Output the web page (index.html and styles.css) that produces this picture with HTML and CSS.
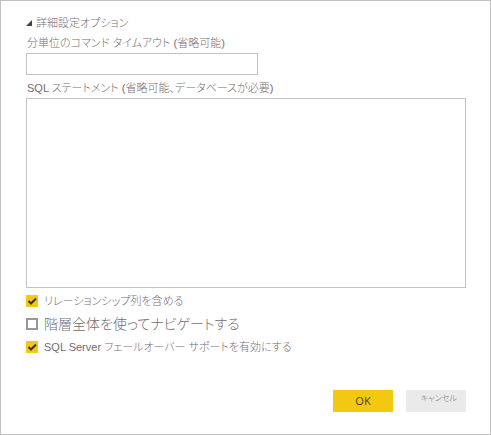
FILE: index.html
```
<!DOCTYPE html>
<html lang="ja">
<head>
<meta charset="utf-8">
<meta name="viewport" content="width=device-width, initial-scale=1">
<title>詳細設定オプション</title>
<link rel="stylesheet" href="styles.css">
</head>
<body>
<form class="dialog">
  <details class="advanced" open>
    <summary class="heading">
      <svg class="marker" viewBox="0 0 6 6" aria-hidden="true"><path d="M6 0V6H0Z"/></svg>
      <span>詳細設定オプション</span>
    </summary>
    <div class="fields">
      <label class="caption" for="timeout">分単位のコマンド タイムアウト (省略可能)</label>
      <input class="box timeout" id="timeout" type="text">
      <label class="caption statement-caption" for="statement">SQL ステートメント (省略可能、データベースが必要)</label>
      <textarea class="box statement" id="statement"></textarea>
    </div>
    <div class="options">
      <label class="option"><input class="check" type="checkbox" checked><span>リレーションシップ列を含める</span></label>
      <label class="option option-large"><input class="check" type="checkbox"><span>階層全体を使ってナビゲートする</span></label>
      <label class="option"><input class="check" type="checkbox" checked><span>SQL Server フェールオーバー サポートを有効にする</span></label>
    </div>
  </details>
  <div class="actions">
    <button class="button primary" type="button">OK</button>
    <button class="button secondary" type="button">キャンセル</button>
  </div>
</form>
</body>
</html>
```
FILE: styles.css
```
* {
  box-sizing: border-box;
}

body {
  margin: 0;
  background: #fff;
  color: #776b72;
  font-family: "Liberation Sans", "Noto Sans CJK JP", sans-serif;
  font-size: 11px;
  line-height: 20px;
  font-weight: 300;
  font-feature-settings: "palt";
}

.dialog {
  display: flex;
  flex-direction: column;
  justify-content: space-between;
  min-height: 100vh;
  padding: 12px 24px 22px 25px;
  border: 1px solid #c0c0c0;
}

.heading {
  display: flex;
  align-items: center;
  gap: 4px;
  list-style: none;
}

.marker {
  width: 6px;
  height: 6px;
  fill: #444;
}

.fields {
  display: flex;
  flex-direction: column;
}

.box {
  margin: 0;
  border: 1px solid #c3c3c3;
  border-radius: 0;
  background: #fff;
  font: inherit;
}

.timeout {
  width: 232px;
  max-width: 100%;
  height: 22px;
}

.caption {
  padding-left: 1px;
}

.statement-caption {
  margin-top: 3px;
}

.statement {
  height: 190px;
  resize: none;
}

.options {
  display: flex;
  flex-direction: column;
  gap: 3px;
  padding-top: 3px;
}

.option {
  display: flex;
  align-items: center;
  gap: 6px;
}

.option-large {
  font-size: 14px;
}

.check {
  appearance: none;
  width: 12px;
  height: 12px;
  margin: 0;
  border: 2px solid #999;
  background: #fff;
}

.check:checked {
  border: 0;
  background: #f2c811 url("data:image/svg+xml,%3Csvg xmlns='http://www.w3.org/2000/svg' viewBox='0 0 12 12'%3E%3Cpath d='M2.5 6L5 8.5L10 3.5' fill='none' stroke='%23333' stroke-width='2'/%3E%3C/svg%3E");
}

.actions {
  display: flex;
  justify-content: flex-end;
  gap: 13px;
}

.button {
  width: 60px;
  height: 22px;
  padding: 0;
  border: 0;
  font: inherit;
  font-feature-settings: inherit;
}

.primary {
  background: #f2c811;
  color: #444;
  font-family: "Open Sans", sans-serif;
  font-size: 11px;
  font-weight: 400;
  font-feature-settings: normal;
}

.secondary {
  padding: 0 9px 4px;
  background: #eaeaea;
  color: #777;
  font-size: 8px;
  line-height: 18px;
  text-align: right;
}
```
